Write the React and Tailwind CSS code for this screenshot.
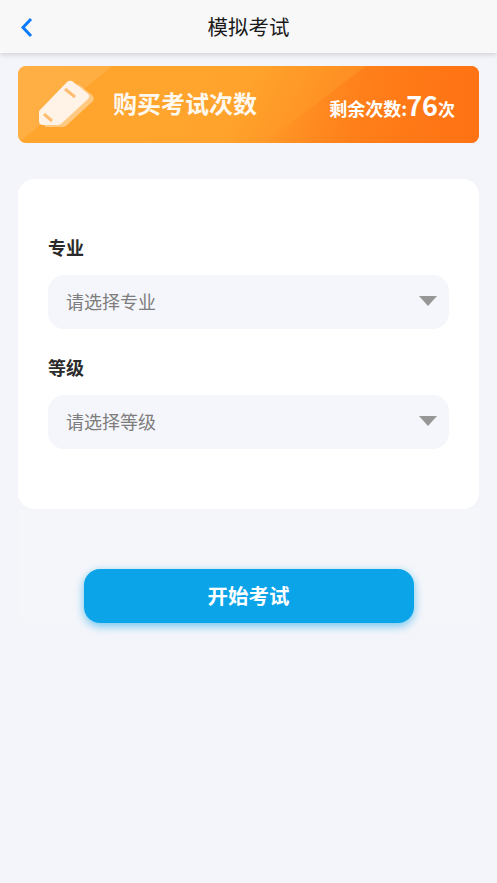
const CJK = 'font-["Noto_Sans_CJK_SC","Noto_Sans",sans-serif]'

const fields = [
  { label: '专业', placeholder: '请选择专业' },
  { label: '等级', placeholder: '请选择等级' },
]

function Eraser() {
  return (
    <svg width="58" height="50" viewBox="0 0 58 50" className="shrink-0">
      <path d="M7 48 L25 48 Q27 48 29 46 L55 22 Q57 19 54 16 L40 5 L5 40 Z" fill="#ffffff" fillOpacity="0.4" />
      <path d="M1 32 L29 3 Q31 1 34 2 L49 14 Q53 17 50 20 L24 44 Q22 46 20 46 L5 46 Q1 46 1 42 Z" fill="#fff3e8" />
      <path d="M27 10 L37 18" stroke="#ffbd72" strokeWidth="3" />
      <path d="M6 35 L14 42" stroke="#ffbd72" strokeWidth="3" />
    </svg>
  )
}

export default function App() {
  return (
    <div className={`min-h-[883px] bg-[#f4f5fa] ${CJK}`}>
      <header className="relative flex h-[53px] items-center justify-center bg-[#f8f8f8] shadow-[0_1px_6px_rgba(0,0,0,0.18)]">
        <svg width="14" height="22" viewBox="0 0 14 22" className="absolute left-[20px] top-[17px]">
          <path d="M11 2 L3 10.5 L11 19" fill="none" stroke="#0a7aff" strokeWidth="3" />
        </svg>
        <h1 className="text-[20.5px] leading-none text-[#1a1a1a]">模拟考试</h1>
      </header>

      <div className="px-[18px] pt-[13px]">
        <div className="relative flex h-[77px] items-center overflow-hidden rounded-[8px] bg-[linear-gradient(118deg,#ffa62e_0%,#ffa32c_48%,#ff8a20_72%,#ff7e19_100%)] pl-[20px] pr-[24px]">
          <div className="absolute left-0 top-0 h-full w-[94px] bg-white/10 [clip-path:polygon(0_0,100%_0,0_100%)]" />
          <div className="absolute right-0 top-0 h-full w-[214px] bg-[linear-gradient(to_right,transparent,#ff7314)] [clip-path:polygon(47%_0,100%_0,100%_100%,0_100%)]" />
          <div className="relative top-[-1px]"><Eraser /></div>
          <span className="relative top-[-2px] ml-[17px] text-[24px] font-bold leading-none text-[#fff8ef]">购买考试次数</span>
          <span className="relative ml-auto flex items-baseline text-[18px] font-bold leading-none text-white">
            剩余次数:<span className="-ml-[1px] text-[27px]">76</span><span className="text-[17px]">次</span>
          </span>
        </div>

        <form className="mt-[36px] flex h-[330px] flex-col gap-[26px] rounded-[16px] bg-white px-[30px] pt-[56px]">
          {fields.map(({ label, placeholder }) => (
            <div key={label}>
              <label className="block text-[18px] font-bold leading-[24px] text-[#2b2b2b]">{label}</label>
              <div className="mt-[16px] flex h-[54px] items-center justify-between rounded-[16px] bg-[#f5f6fb] pb-[2px] pl-[18px] pr-[12px]">
                <span className="text-[18px] leading-none text-[#7d7d7d]">{placeholder}</span>
                <span className="h-[10px] w-[18px] bg-[#979797] [clip-path:polygon(0_0,100%_0,50%_100%)]" />
              </div>
            </div>
          ))}
        </form>

        <div className="flex h-[114px] items-end justify-center bg-[#f5f6fa]">
          <button className="h-[54px] w-[330px] rounded-[16px] bg-[#0ba4e9] pb-[2px] text-[20.5px] font-bold text-white shadow-[0_3px_10px_rgba(11,164,233,0.6)]">
            开始考试
          </button>
        </div>
      </div>
    </div>
  )
}
